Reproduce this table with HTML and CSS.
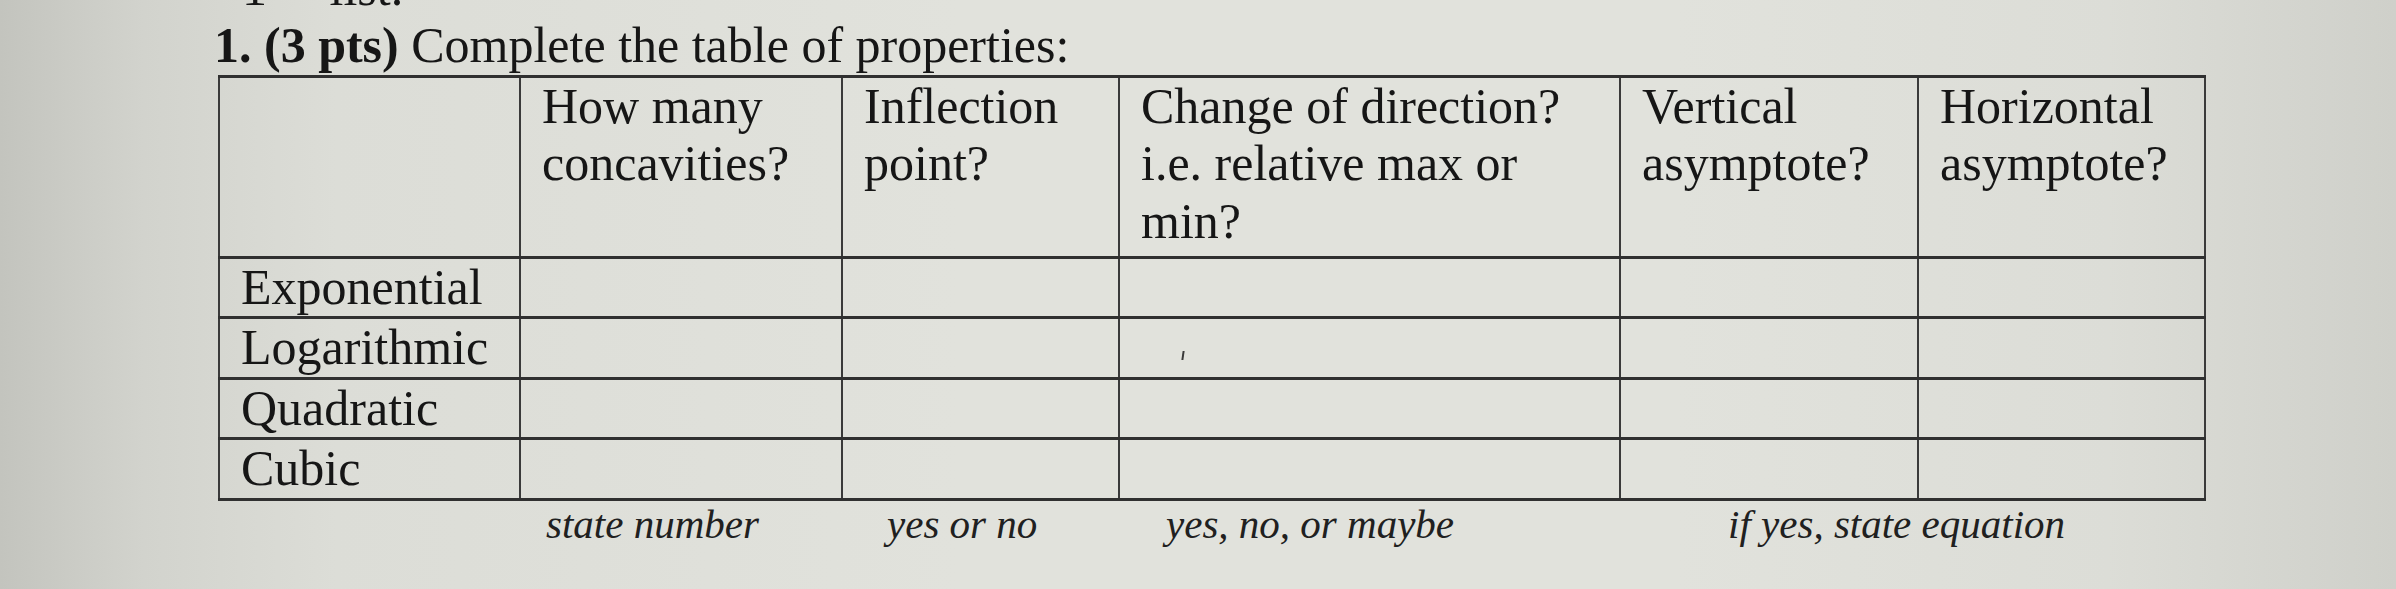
FILE: index.html
```html
<!DOCTYPE html>
<html lang="en">
<head>
<meta charset="utf-8">
<title>Complete the table of properties</title>
<link rel="stylesheet" href="styles.css">
</head>
<body>
<div class="page">
  <p class="prev-line">1<sup>st</sup> list.</p>
  <p class="question"><b>1. (3 pts)</b> Complete the table of properties:</p>
  <table class="props">
    <colgroup>
      <col class="c-label">
      <col class="c-conc">
      <col class="c-infl">
      <col class="c-dir">
      <col class="c-vert">
      <col class="c-horiz">
    </colgroup>
    <thead>
      <tr class="head-row">
        <th></th>
        <th>How many concavities?</th>
        <th>Inflection point?</th>
        <th>Change of direction? i.e. relative max or min?</th>
        <th>Vertical asymptote?</th>
        <th>Horizontal asymptote?</th>
      </tr>
    </thead>
    <tbody>
      <tr><td>Exponential</td><td></td><td></td><td></td><td></td><td></td></tr>
      <tr><td>Logarithmic</td><td></td><td></td><td class="marked"><span class="tick"></span></td><td></td><td></td></tr>
      <tr><td>Quadratic</td><td></td><td></td><td></td><td></td><td></td></tr>
      <tr><td>Cubic</td><td></td><td></td><td></td><td></td><td></td></tr>
    </tbody>
  </table>
  <div class="hints">
    <span class="hint h-conc">state number</span>
    <span class="hint h-infl">yes or no</span>
    <span class="hint h-dir">yes, no, or maybe</span>
    <span class="hint h-asym">if yes, state equation</span>
  </div>
</div>
</body>
</html>
```

FILE: styles.css
```css
html, body {
  margin: 0;
  padding: 0;
}

body {
  width: 2396px;
  height: 589px;
  overflow: hidden;
  background: linear-gradient(to right, #c3c4be 0%, #d2d3cd 6%, #dcddd7 14%, #e1e2dc 40%, #e1e2dc 70%, #dcddd7 88%, #cfd0ca 100%);
  font-family: "Liberation Serif", "Times New Roman", serif;
  color: #161616;
}

.page {
  padding: 17px 0 0 214px;
}

.prev-line {
  margin: -57.5px 0 0 28px;
  font-size: 50px;
  line-height: 57.5px;
  word-spacing: 30px;
}

.prev-line sup {
  font-size: 30px;
  line-height: 0;
  vertical-align: baseline;
  position: relative;
  top: -22px;
}

.question {
  margin: 0;
  font-size: 50px;
  line-height: 57.5px;
  white-space: nowrap;
}

.props {
  margin-left: 4px;
  margin-top: 0;
  width: 1986px;
  table-layout: fixed;
  border-collapse: collapse;
  font-size: 50px;
  line-height: 57.5px;
}

.c-label { width: 301px; }
.c-conc { width: 322px; }
.c-infl { width: 277px; }
.c-dir { width: 501px; }
.c-vert { width: 298px; }
.c-horiz { width: 287px; }

.props th,
.props td {
  border-left: 2px solid #3a3a3a;
  border-right: 2px solid #3a3a3a;
  border-top: 3px solid #303030;
  border-bottom: 3px solid #303030;
  padding: 0 8px 0 21px;
  text-align: left;
  vertical-align: top;
  font-weight: normal;
}

.head-row th {
  height: 178px;
}

.props tbody td {
  height: 57px;
}

.marked {
  position: relative;
}

.tick {
  position: absolute;
  left: 62px;
  top: 32px;
  width: 2px;
  height: 9px;
  background: #3a3a3a;
  transform: skewX(-8deg);
}

.hints {
  display: grid;
  grid-template-columns: 301px 322px 277px 501px 585px;
  margin-left: 6px;
  margin-top: 0;
  font-style: italic;
  font-size: 41px;
  line-height: 47px;
  color: #202020;
}

.hint {
  white-space: nowrap;
}

.h-conc { grid-column: 2; padding-left: 25px; }
.h-infl { grid-column: 3; padding-left: 44px; }
.h-dir { grid-column: 4; padding-left: 46px; }
.h-asym { grid-column: 5; padding-left: 107px; }
```
